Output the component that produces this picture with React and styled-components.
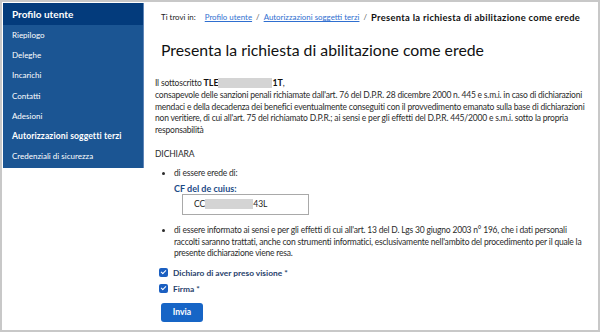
import React from 'react';
import styled, { createGlobalStyle } from 'styled-components';

const GlobalStyle = createGlobalStyle`
  html, body { margin: 0; padding: 0; background: #fff; }
  body { font-family: Lato, "Liberation Sans", sans-serif; }
`;

const menuItems = [
  { label: 'Riepilogo' },
  { label: 'Deleghe' },
  { label: 'Incarichi' },
  { label: 'Contatti' },
  { label: 'Adesioni' },
  { label: 'Autorizzazioni soggetti terzi', active: true },
  { label: 'Credenziali di sicurezza' },
];

export default function App() {
  return (
    <>
      <GlobalStyle />
      <Frame>
        <Sidebar>
          <SideHead>Profilo utente</SideHead>
          {menuItems.map((item) => (
            <SideItem key={item.label} $active={item.active}>{item.label}</SideItem>
          ))}
        </Sidebar>
        <Main>
          <Breadcrumb>
            <Lead>Ti trovi in:</Lead>
            <Crumb href="#">Profilo utente</Crumb>
            <Sep>/</Sep>
            <Crumb href="#">Autorizzazioni soggetti terzi</Crumb>
            <Sep>/</Sep>
            <Current>Presenta la richiesta di abilitazione come erede</Current>
          </Breadcrumb>
          <Title>Presenta la richiesta di abilitazione come erede</Title>
          <Signer>
            Il sottoscritto <b>TLE<Redacted $w={54} />1T</b>,
          </Signer>
          <Text>
            consapevole delle sanzioni penali richiamate dall'art. 76 del D.P.R. 28 dicembre 2000 n. 445 e s.m.i. in caso di dichiarazioni<br />
            mendaci e della decadenza dei benefici eventualmente conseguiti con il provvedimento emanato sulla base di dichiarazioni<br />
            non veritiere, di cui all'art. 75 del richiamato D.P.R.; ai sensi e per gli effetti del D.P.R. 445/2000 e s.m.i. sotto la propria<br />
            responsabilità
          </Text>
          <Declare>DICHIARA</Declare>
          <List>
            <li>
              di essere erede di:
              <FieldLabel>CF del de cuius:</FieldLabel>
              <Input>CC<Redacted $w={48} />43L</Input>
            </li>
            <li>
              di essere informato ai sensi e per gli effetti di cui all'art. 13 del D. Lgs 30 giugno 2003 n° 196, che i dati personali<br />
              raccolti saranno trattati, anche con strumenti informatici, esclusivamente nell'ambito del procedimento per il quale la<br />
              presente dichiarazione viene resa.
            </li>
          </List>
          <Checks>
            <Check>
              <Box />
              Dichiaro di aver preso visione *
            </Check>
            <Check>
              <Box />
              Firma *
            </Check>
          </Checks>
          <Button>Invia</Button>
        </Main>
      </Frame>
    </>
  );
}

const Frame = styled.div`
  box-sizing: border-box;
  width: 600px;
  height: 332px;
  border: 2px solid #c8c8c8;
  padding: 1px;
  display: flex;
  align-items: flex-start;
  overflow: hidden;
`;

const Sidebar = styled.nav`
  box-sizing: border-box;
  width: 141px;
  flex-shrink: 0;
  background: #1b5593;
  border-right: 1px solid #5f86b8;
  padding-bottom: 2px;
  display: flex;
  flex-direction: column;
`;

const SideHead = styled.div`
  height: 22px;
  line-height: 23px;
  padding-left: 9px;
  background: #033b7c;
  color: #fff;
  font-weight: 700;
  font-size: 10px;
`;

const SideItem = styled.div`
  height: 20.2px;
  line-height: 21px;
  padding-left: 9px;
  color: #fff;
  font-size: ${(p) => (p.$active ? '8.6px' : '8px')};
  font-weight: ${(p) => (p.$active ? 700 : 400)};
  letter-spacing: ${(p) => (p.$active ? '0.1px' : '0')};
  white-space: nowrap;
`;

const Main = styled.main`
  flex: 1;
  min-width: 0;
  padding: 0 6px 0 11px;
  color: #2b2b2b;
  font-size: 8.5px;
`;

const Breadcrumb = styled.div`
  display: flex;
  align-items: center;
  gap: 4px;
  padding-left: 6px;
  margin-top: 7px;
  height: 14px;
  font-size: 7.9px;
  color: #222;
  white-space: nowrap;
`;

const Lead = styled.span`
  margin-right: 5px;
`;

const Crumb = styled.a`
  color: #2f6fd0;
  text-decoration: underline;
`;

const Sep = styled.span`
  color: #555;
`;

const Current = styled.b`
  color: #111;
  font-size: 9.4px;
  letter-spacing: 0.3px;
`;

const Title = styled.h1`
  margin: 16px 0 0 6px;
  font-size: 15.8px;
  font-weight: 400;
  color: #111;
  line-height: 20px;
`;

const Signer = styled.div`
  margin-top: 17px;
  line-height: 12px;
  letter-spacing: -0.2px;
  b { color: #111; font-size: 8.8px; letter-spacing: 0; }
`;

const Text = styled.p`
  margin: 1px 0 0;
  line-height: 11.6px;
  letter-spacing: -0.2px;
  white-space: nowrap;
`;

const Redacted = styled.span`
  display: inline-block;
  width: ${(p) => p.$w}px;
  height: 10px;
  vertical-align: -2px;
  background: #d4d4d4;
`;

const Declare = styled.div`
  margin-top: 12px;
  line-height: 12px;
  letter-spacing: -0.1px;
`;

const List = styled.ul`
  margin: 8px 0 0;
  padding-left: 19px;
  line-height: 11.6px;
  letter-spacing: -0.2px;
  white-space: nowrap;

  li + li { margin-top: 10px; }
`;

const FieldLabel = styled.div`
  margin-top: 4px;
  color: #1c4a86;
  font-weight: 700;
  font-size: 9px;
  line-height: 10px;
  letter-spacing: 0;
`;

const Input = styled.div`
  box-sizing: border-box;
  width: 127px;
  height: 21px;
  margin: 0 0 0 8px;
  border: 1px solid #a9a9a9;
  padding-left: 11px;
  display: flex;
  align-items: center;
  color: #222;
  letter-spacing: 0;
`;

const Checks = styled.div`
  margin-top: 7px;
  display: flex;
  flex-direction: column;
  gap: 4px;
`;

const Check = styled.label`
  display: flex;
  align-items: center;
  gap: 5px;
  padding-left: 4px;
  height: 12px;
  color: #1f3e6b;
  font-weight: 700;
  font-size: 8.4px;
`;

const Box = styled.span`
  width: 9px;
  height: 9px;
  border-radius: 2px;
  background: #1b5fc1;
  position: relative;

  &::after {
    content: '';
    position: absolute;
    left: 3px;
    top: 1px;
    width: 2px;
    height: 4px;
    border: solid #fff;
    border-width: 0 1.5px 1.5px 0;
    transform: rotate(45deg);
  }
`;

const Button = styled.button`
  display: block;
  margin: 8px 0 0 6px;
  width: 42px;
  height: 19px;
  padding: 0;
  border: none;
  border-radius: 3px;
  background: #1765c6;
  color: #fff;
  font-family: inherit;
  font-size: 8.6px;
  font-weight: 700;
`;
